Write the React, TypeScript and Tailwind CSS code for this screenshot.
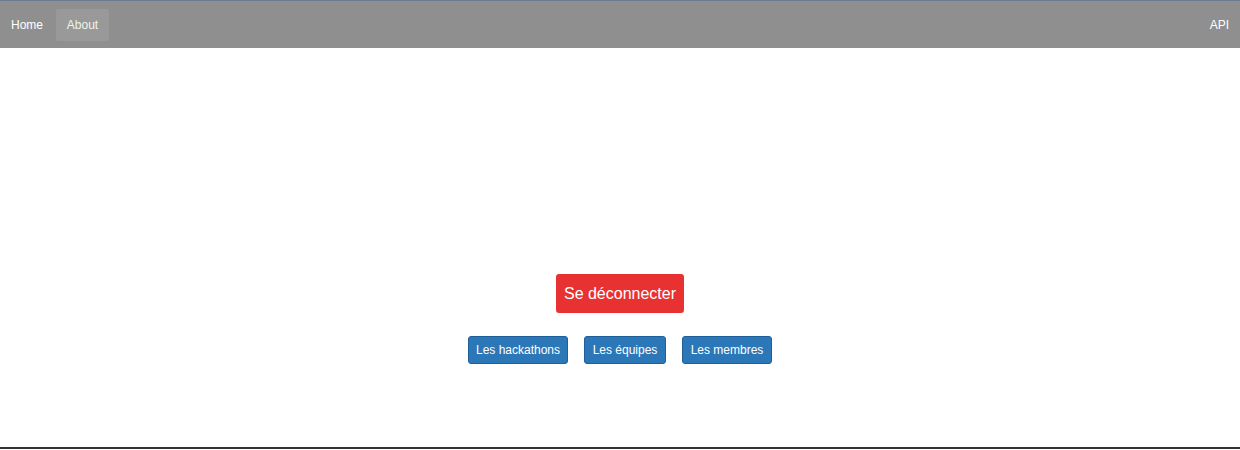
export default function App() {
  return (
    <div className="w-[1240px] h-[450px] bg-white flex flex-col" style={{ fontFamily: '"Liberation Sans", Arial, sans-serif' }}>
      <nav className="h-[48px] bg-[#8f8f8f] border-t border-[#6a7a94] flex items-center justify-between pl-[1px] pr-[11px] shrink-0">
        <div className="flex items-center">
          <a className="px-[10px] py-[10px] text-[12px] text-white">Home</a>
          <a className="ml-[3px] w-[53px] h-[32px] flex items-center justify-center rounded-[2px] bg-[#999999] text-[12px] text-[#eef5ee]">About</a>
        </div>
        <a className="text-[12px] text-white">API</a>
      </nav>
      <main className="flex-1 flex flex-col items-center pt-[226px]">
        <button className="w-[128px] h-[39px] rounded-[3px] bg-[#e83232] text-white text-[16px]">Se déconnecter</button>
        <div className="flex gap-[16px] mt-[23px]">
          <button className="w-[100px] h-[28px] rounded-[3px] bg-[#2b77b8] border border-[#20609a] text-white text-[12px]">Les hackathons</button>
          <button className="w-[82px] h-[28px] rounded-[3px] bg-[#2b77b8] border border-[#20609a] text-white text-[12px]">Les équipes</button>
          <button className="w-[90px] h-[28px] rounded-[3px] bg-[#2b77b8] border border-[#20609a] text-white text-[12px]">Les membres</button>
        </div>
      </main>
      <div className="h-[2px] bg-[#333333] mb-[1px] shrink-0" />
    </div>
  )
}
